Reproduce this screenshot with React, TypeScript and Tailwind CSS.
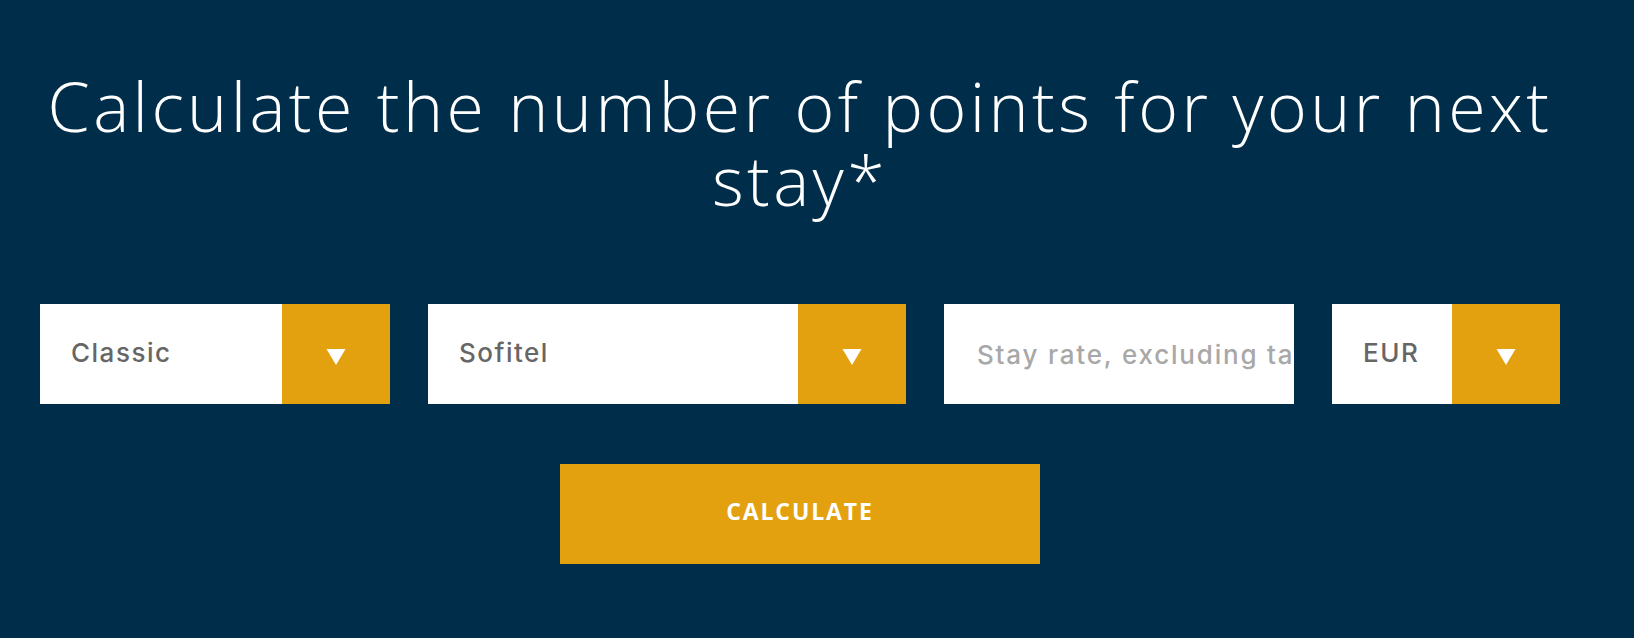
import React from "react";

function Triangle() {
  return (
    <svg width="22" height="18" viewBox="0 0 22 18" className="mt-[5px] block">
      <polygon points="1.5,1 20.5,1 11,17" fill="#ffffff" />
    </svg>
  );
}

const fieldFont = { fontFamily: 'Inter, "Open Sans", sans-serif' };

function Select({ label, width, textWidth }: { label: string; width: string; textWidth: string }) {
  return (
    <div className={`flex h-[100px] ${width} bg-white`}>
      <div
        style={fieldFont}
        className={`flex items-center pb-[3px] pl-[31px] ${textWidth} text-[26px] font-medium tracking-[1.5px] text-[#666666]`}
      >
        {label}
      </div>
      <div className="flex w-[108px] items-center justify-center bg-[#e4a10f]">
        <Triangle />
      </div>
    </div>
  );
}

export default function App() {
  return (
    <div
      className="min-h-screen w-full bg-[#002d4a]"
      style={{ fontFamily: '"Open Sans", "Liberation Sans", sans-serif' }}
    >
      <div className="w-[1600px] px-10 pt-[69px] pb-[74px]">
        <h1 className="text-center text-[68px] font-light leading-[74px] tracking-[3.4px] text-white">
          Calculate the number of points for your next
          <br />
          stay*
        </h1>
        <div className="mt-[87px] flex gap-[38px]">
          <Select label="Classic" width="w-[350px]" textWidth="w-[242px]" />
          <Select label="Sofitel" width="w-[478px]" textWidth="w-[370px]" />
          <div className="flex h-[100px] w-[350px] items-center overflow-hidden bg-white pl-[33px]">
            <input
              style={fieldFont}
              className="w-full bg-transparent text-[26px] font-medium tracking-[1.8px] text-[#666666] outline-none placeholder:text-[#a8a8a8]"
              placeholder="Stay rate, excluding taxes"
            />
          </div>
          <Select label="EUR" width="w-[228px]" textWidth="w-[120px]" />
        </div>
        <div className="mt-[60px] flex justify-center">
          <button className="h-[100px] w-[480px] bg-[#e4a10f] pb-[5px] text-[23px] font-bold tracking-[1.9px] text-white">
            CALCULATE
          </button>
        </div>
      </div>
    </div>
  );
}
